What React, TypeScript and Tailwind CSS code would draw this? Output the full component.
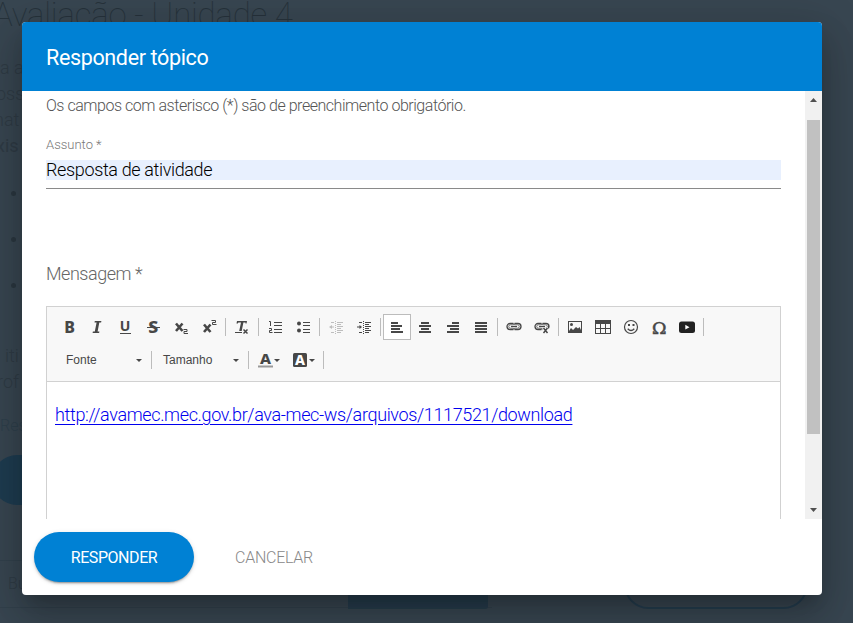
import type { ReactNode } from "react";

const Ic = ({ children, w = 16 }: { children: ReactNode; w?: number }) => (
  <svg width={w} height="16" viewBox={`0 0 ${w} 16`} fill="#474747" stroke="none" className="shrink-0 overflow-visible">
    {children}
  </svg>
);

const Btn = ({ children, active, label }: { children: ReactNode; active?: boolean; label: string }) => (
  <button
    aria-label={label}
    className={
      "flex h-[26px] w-7 shrink-0 items-center justify-center " +
      (active ? "border border-[#bcbcbc] bg-white" : "")
    }
  >
    <Ic>{children}</Ic>
  </button>
);

const Sep = () => <span className="mx-[2px] h-[18px] w-px shrink-0 bg-[#bcbcbc]" />;

const Caret = () => (
  <svg width="6" height="3" viewBox="0 0 6 3" className="shrink-0" fill="#474747">
    <path d="M0 0h6L3 3z" />
  </svg>
);

const Bars = ({ rows }: { rows: [number, number][] }) => (
  <>
    {rows.map(([x, w], i) => (
      <rect key={i} x={x} y={3 + i * 3} width={w} height="2" />
    ))}
  </>
);

const IndentLines = () => (
  <>
    <path d="M7.5 2v13" stroke="#474747" strokeDasharray="1 1" />
    <path d="M9 3h6v1H9zM9 5h4v1H9zM9 7h6v1H9zM9 9h4v1H9zM9 11h6v1H9zM9 13h4v1H9zM3 3h3v1H3zM3 13h3v1H3z" />
  </>
);

const LinkShape = () => (
  <g fill="none" stroke="#474747">
    <path d="M7.5 4.5H4a3 3 0 0 0 0 6h3.5M8.5 4.5H12a3 3 0 0 1 0 6H8.5" strokeWidth="1.3" />
    <path d="M7.5 4.5v1.3H4.4a1.7 1.7 0 0 0 0 3.4h3.1v1.3M8.5 4.5v1.3h3.1a1.7 1.7 0 0 1 0 3.4H8.5v1.3" strokeWidth=".7" />
    <path d="M5 7.5h6" strokeWidth="1.2" />
  </g>
);

function Background() {
  return (
    <div className="absolute inset-0 overflow-hidden bg-[#384651] font-['Roboto','Noto_Sans',sans-serif] font-light text-[#2f3b45]">
      <div className="absolute -left-[7px] -top-[5px] whitespace-nowrap text-[33px] font-thin leading-10 tracking-[-0.2px] text-[#26323b]">
        Avaliação - Unidade 4
      </div>
      <div className="absolute left-0 top-[55px] text-[18px] leading-[26px]">
        <p>a a</p>
        <p className="-ml-1">oss</p>
        <p className="-ml-1.5">nat</p>
        <p className="-ml-1 font-normal">xis</p>
      </div>
      <div className="absolute left-[11px] top-[191px] flex flex-col gap-[41px]">
        <i className="size-[5px] rounded-full bg-[#2b3740]" />
        <i className="size-[5px] rounded-full bg-[#2b3740]" />
        <i className="size-[5px] rounded-full bg-[#2b3740]" />
      </div>
      <div className="absolute left-[5px] top-[343px] text-[18px] leading-[26px]">
        <p>iti</p>
        <p className="-ml-2">rof</p>
      </div>
      <div className="absolute left-0 top-[414px] text-[16px] text-[#2e3f4b]">Res</div>
      <div className="absolute -left-2 top-[455px] h-[50px] w-[120px] rounded-full bg-[#1e3c50]" />
      <div className="absolute -left-2 top-[560px] h-12 w-[500px] border-y border-[#32414c]" />
      <div className="absolute left-2 top-[572px] text-[16px]">Bu</div>
      <div className="absolute left-[348px] top-[569px] h-10 w-[140px] rounded-r-[3px] bg-[#263c4c]" />
      <div className="absolute left-[624px] top-[560px] h-[49px] w-[184px] rounded-full border-2 border-[#243d4e]" />
    </div>
  );
}

function Toolbar() {
  return (
    <div className="flex h-[75px] shrink-0 flex-col gap-[7px] border-b border-[#d1d1d1] bg-[#f8f8f8] pl-2 pt-[7px]">
      <div className="flex items-center">
        <Btn label="Negrito"><text x="3.2" y="13.8" fontFamily="Noto Sans" fontWeight="800" fontSize="16">B</text></Btn>
        <Btn label="Itálico">
          <path d="M5.8 2h6.6l-.3 1.5h-1.8L8.6 12.5h1.8L10.1 14H3.6l.3-1.5h1.9L7.6 3.5H5.5z" />
        </Btn>
        <Btn label="Sublinhado">
          <text x="2.7" y="12" fontFamily="Noto Sans" fontWeight="700" fontSize="14">U</text>
          <rect x="3" y="14" width="11" height="1" />
        </Btn>
        <Btn label="Tachado">
          <text x="3.2" y="13.8" fontFamily="Noto Sans" fontWeight="800" fontSize="16" textLength="10" lengthAdjust="spacingAndGlyphs">S</text>
          <rect x="2" y="8" width="13" height="1" />
        </Btn>
        <Btn label="Subscrito">
          <path d="M3 4.5l6.5 7.5M9.5 4.5L3 12" stroke="#474747" strokeWidth="2.6" />
          <path d="M10.5 10.5h3.5v2h-3v2h4" fill="none" stroke="#474747" />
        </Btn>
        <Btn label="Sobrescrito">
          <path d="M3 5.5l6.5 7.5M9.5 5.5L3 13" stroke="#474747" strokeWidth="2.6" />
          <path d="M10.5 1.5h4v2h-3v2h4" fill="none" stroke="#474747" />
        </Btn>
        <Sep />
        <Btn label="Remover formatação">
          <path d="M3 2h10l-.5 2.5h-1V3.6H9.4L7.7 12H5.2L7 3.6H4.4L3.7 4.5H2.5z" />
          <rect x="1" y="13" width="7" height="1" />
          <path d="M9.5 10.5l4 4M13.5 10.5l-4 4" stroke="#474747" strokeWidth="1.5" />
        </Btn>
        <Sep />
        <Btn label="Lista numerada">
          <path d="M2 2.5h1.5V7M2 9.5h2.5v2h-2v2h3" fill="none" stroke="#474747" />
          <path d="M7 3h8v1H7zM7 6h8v1H7zM7 10h8v1H7zM7 13h8v1H7z" />
        </Btn>
        <Btn label="Lista com marcadores">
          <circle cx="4" cy="4.5" r="2" /><circle cx="4" cy="11.5" r="2" />
          <path d="M8 3h7v1H8zM8 6h7v1H8zM8 10h7v1H8zM8 13h7v1H8z" />
        </Btn>
        <Sep />
        <Btn label="Diminuir recuo">
          <g opacity=".32"><IndentLines /><path d="M1 8l3-2v1.5h2v1H4V10z" /></g>
        </Btn>
        <Btn label="Aumentar recuo">
          <IndentLines /><path d="M6 8L3.5 6v1.5H1v1h2.5V10z" />
        </Btn>
        <Sep />
        <Btn label="Alinhar à esquerda" active><Bars rows={[[2, 7], [2, 11], [2, 9], [2, 12]]} /></Btn>
        <Btn label="Centralizar"><Bars rows={[[4, 8], [2, 12], [4, 8], [2, 12]]} /></Btn>
        <Btn label="Alinhar à direita"><Bars rows={[[7, 7], [2, 12], [5, 9], [2, 12]]} /></Btn>
        <Btn label="Justificar"><Bars rows={[[2, 12], [2, 12], [2, 12], [2, 12]]} /></Btn>
        <Sep />
        <Btn label="Inserir link"><LinkShape /></Btn>
        <Btn label="Remover link">
          <LinkShape />
          <rect x="8.5" y="8.5" width="7" height="6" fill="#f8f8f8" />
          <path d="M9.5 9l4 5M13.5 9l-4 5" stroke="#474747" strokeWidth="1.5" />
          <path d="M14.5 6.5v3" stroke="#474747" />
        </Btn>
        <Sep />
        <Btn label="Imagem">
          <path d="M1 2h14v12H1zM2 3v9l2-3 2 2 3-3 2 1.5L12.5 8 14 11V3z" fillRule="evenodd" />
          <circle cx="4.5" cy="5.5" r="1.5" />
        </Btn>
        <Btn label="Tabela">
          <path d="M0 1h16v14H0zM1 5v4h4V5zM6 5v4h4V5zM11 5v4h4V5zM1 10v4h4v-4zM6 10v4h4v-4zM11 10v4h4v-4z" fillRule="evenodd" />
        </Btn>
        <Btn label="Emoticon">
          <circle cx="8" cy="8" r="6.5" fill="none" stroke="#474747" strokeWidth="1.2" />
          <path d="M5 5h2v2H5zM9.5 5h2v2h-2z" />
          <path d="M4.7 9.8Q8 13.2 11.3 9.8" fill="none" stroke="#474747" strokeWidth="1.3" />
        </Btn>
        <Btn label="Caractere especial"><text x="1" y="14.5" fontFamily="DejaVu Serif" fontWeight="400" fontSize="17.5" stroke="#474747" strokeWidth=".5" textLength="14.5" lengthAdjust="spacingAndGlyphs">Ω</text></Btn>
        <Btn label="YouTube">
          <rect x="0" y="2.5" width="16" height="11.5" rx="2.5" fill="#222" />
          <path d="M6.3 5.8v4.8l4.2-2.4z" fill="white" />
        </Btn>
        <Sep />
      </div>
      <div className="flex h-[26px] items-center font-['Liberation_Sans',Arial,sans-serif] text-[12px] text-[#474747]">
        <div className="flex w-[94px] items-center pl-[11px]">
          <span className="w-[70px]">Fonte</span><Caret />
        </div>
        <Sep />
        <div className="flex w-[92px] items-center pl-[9px]">
          <span className="w-[70px]">Tamanho</span><Caret />
        </div>
        <Sep />
        <div className="flex w-[31px] items-center pl-[7px]">
          <Ic>
            <text x="2" y="11.5" fontFamily="Noto Sans" fontWeight="800" fontSize="14.5" textLength="11" lengthAdjust="spacingAndGlyphs">A</text>
            <rect x="0" y="13.5" width="15" height="2" fill="#999" />
          </Ic>
          <Caret />
        </div>
        <div className="flex w-[39px] items-center gap-px pl-[10px]">
          <Ic>
            <rect x="1" y="1" width="14" height="14" rx="1.5" />
            <text x="3" y="13" fontFamily="Noto Sans" fontWeight="800" fontSize="14" fill="white" textLength="10" lengthAdjust="spacingAndGlyphs">A</text>
          </Ic>
          <Caret />
        </div>
        <Sep />
      </div>
    </div>
  );
}

export default function App() {
  return (
    <div className="relative h-[623px] w-[853px] overflow-hidden pl-[22px] pt-[22px] font-['Roboto','Noto_Sans',sans-serif]">
      <Background />
      <main className="relative flex h-[573px] w-[800px] flex-col overflow-hidden rounded-[4px] bg-white shadow-[0_11px_15px_-7px_rgba(0,0,0,.2),0_24px_38px_3px_rgba(0,0,0,.14),0_9px_46px_8px_rgba(0,0,0,.12)]">
        <header className="flex h-[69px] shrink-0 items-center bg-[#0081d4] pl-6 pt-1">
          <h1 className="text-[21.5px] tracking-[-0.35px] text-white">Responder tópico</h1>
        </header>
        <div className="flex h-[428px] shrink-0">
          <section className="flex w-[783px] flex-col overflow-hidden pl-6 pr-6">
            <p className="mt-[3px] text-[16px] font-light leading-6 tracking-[-0.465px] text-[#555]">
              Os campos com asterisco (*) são de preenchimento obrigatório.
            </p>
            <label className="mt-[17px] text-[13px] font-light leading-5 text-[#777]">Assunto *</label>
            <div className="mt-[5px] h-[20px] bg-[#e8f0fe] text-[18px] font-light leading-5 tracking-[-0.36px] text-black">
              Resposta de atividade
            </div>
            <div className="mt-2 h-px shrink-0 bg-[#8a8a8a]" />
            <label className="mt-[71px] text-[18px] font-light leading-7 tracking-[-0.47px] text-[#666]">Mensagem *</label>
            <div className="mt-[18px] flex h-[260px] w-[735px] shrink-0 flex-col border border-[#d1d1d1]">
              <Toolbar />
              <a className="ml-2 mt-[19px] self-start text-[18px] font-light leading-7 tracking-[-0.36px] text-[#0000ee] underline underline-offset-[3px]">
                http://avamec.mec.gov.br/ava-mec-ws/arquivos/1117521/download
              </a>
            </div>
          </section>
          <aside className="flex w-[17px] flex-col items-center bg-[#f1f1f1]">
            <svg width="7" height="4" viewBox="0 0 7 4" className="mt-[7px] shrink-0" fill="#505050"><path d="M3.5 0L7 4H0z" /></svg>
            <div className="ml-[-1px] mt-[18px] h-[314px] w-[13px] shrink-0 bg-[#c1c1c1]" />
            <svg width="7" height="4" viewBox="0 0 7 4" className="mt-[74px] shrink-0" fill="#505050"><path d="M0 0h7L3.5 4z" /></svg>
          </aside>
        </div>
        <footer className="flex flex-1 items-start pl-3 pt-[13px]">
          <button className="h-[50px] w-[160px] rounded-full bg-[#0081d4] pt-[2px] text-[16px] tracking-[-0.45px] text-white shadow-[0_3px_1px_-2px_rgba(0,0,0,.2),0_2px_2px_0_rgba(0,0,0,.14),0_1px_5px_0_rgba(0,0,0,.12)]">
            RESPONDER
          </button>
          <button className="ml-[41px] h-[50px] pt-[2px] text-[16px] font-light tracking-[-0.25px] text-[#888]">CANCELAR</button>
        </footer>
      </main>
    </div>
  );
}
